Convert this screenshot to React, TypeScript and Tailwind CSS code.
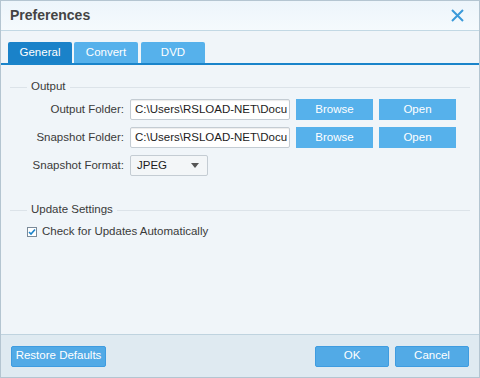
import React from "react";

const font = { fontFamily: '"Liberation Sans", Arial, sans-serif' };

function Section({ title, children }: { title: string; children?: React.ReactNode }) {
  return (
    <div>
      <div className="flex items-center h-[14px]">
        <div className="w-[17px] h-px bg-[#dce3e9]" />
        <span className="px-[4px] text-[11.5px] text-[#3a3a3a] leading-none">{title}</span>
        <div className="flex-1 h-px bg-[#dce3e9]" />
      </div>
      {children}
    </div>
  );
}

function Row({ label, value }: { label: string; value: string }) {
  return (
    <div className="flex items-center h-[21px]">
      <div className="w-[114px] text-right text-[11.5px] text-[#3a3a3a]">{label}</div>
      <div className="ml-[6px] w-[160px] h-[21px] border border-[#c4ccd3] rounded-[2px] bg-white overflow-hidden whitespace-nowrap text-[11.5px] text-[#1c1c1c] pl-[4px] leading-[19px] shadow-[inset_0_1px_1px_rgba(0,0,0,0.08)]">
        <span className="block w-[152px] overflow-hidden text-clip">{value}</span>
      </div>
      <button className="ml-[6px] w-[77px] h-[21px] bg-[#56b1eb] text-white text-[11.5px]">Browse</button>
      <button className="ml-[6px] w-[77px] h-[21px] bg-[#56b1eb] text-white text-[11.5px]">Open</button>
    </div>
  );
}

export default function App() {
  return (
    <div
      style={font}
      className="w-[480px] h-[378px] flex flex-col border border-[#b4c5d1] bg-[#f0f5f9] overflow-hidden"
    >
      {/* Title bar */}
      <div className="h-[30px] flex items-center justify-between pl-[9px] pr-[15px] bg-gradient-to-b from-[#edf5fb] to-[#f5fafd] border-b border-[#c2d8e4]">
        <span className="text-[14px] font-bold text-[#444]">Preferences</span>
        <svg width="13" height="13" viewBox="0 0 13 13">
          <path d="M1 1 L12 12 M12 1 L1 12" stroke="#3a9ad9" strokeWidth="2" />
        </svg>
      </div>

      {/* Tabs */}
      <div className="pt-[11px] flex gap-[2px] pl-[7px] border-b-2 border-[#1a84ca]">
        <div className="w-[64px] h-[21px] rounded-t-[2px] bg-[#1a82c9] text-white text-[11.5px] flex items-center justify-center">General</div>
        <div className="w-[64px] h-[21px] rounded-t-[2px] bg-[#56b1eb] text-white text-[11.5px] flex items-center justify-center">Convert</div>
        <div className="w-[64px] h-[21px] rounded-t-[2px] bg-[#56b1eb] text-white text-[11.5px] flex items-center justify-center ml-[1px]">DVD</div>
      </div>

      {/* Body */}
      <div className="flex-1 pl-[9px] pr-[9px] pt-[15px]">
        <Section title="Output">
          <div className="mt-[5px] flex flex-col gap-[7px]">
            <Row label="Output Folder:" value="C:\Users\RSLOAD-NET\Documents" />
            <Row label="Snapshot Folder:" value="C:\Users\RSLOAD-NET\Documents" />
            <div className="flex items-center h-[21px]">
              <div className="w-[114px] text-right text-[11.5px] text-[#3a3a3a]">Snapshot Format:</div>
              <div className="ml-[6px] w-[78px] h-[21px] border border-[#c4ccd3] rounded-[2px] bg-[#f3f6f8] flex items-center justify-between pl-[6px] pr-[8px] text-[11.5px] text-[#1c1c1c]">
                <span>JPEG</span>
                <svg width="8" height="5" viewBox="0 0 8 5">
                  <path d="M0 0 H8 L4 5 Z" fill="#555" />
                </svg>
              </div>
            </div>
          </div>
        </Section>
        <div className="mt-[27px]">
          <Section title="Update Settings">
            <label className="mt-[6px] ml-[17px] flex items-center gap-[5px] text-[11.5px] text-[#3a3a3a]">
              <span className="w-[10px] h-[10px] border border-[#7a8a99] bg-white flex items-center justify-center">
                <svg width="8" height="8" viewBox="0 0 8 8">
                  <path d="M1 4 L3 6 L7 1.5" stroke="#1a82c9" strokeWidth="1.6" fill="none" />
                </svg>
              </span>
              Check for Updates Automatically
            </label>
          </Section>
        </div>
      </div>

      {/* Footer */}
      <div className="h-[43px] border-t border-[#bfd3df] bg-[#dfeaf1] flex items-center px-[10px]">
        <button className="w-[95px] h-[21px] bg-[#52aae6] border border-[#3f9ce0] rounded-[2px] text-white text-[11.5px]">Restore Defaults</button>
        <div className="flex-1" />
        <button className="w-[74px] h-[21px] bg-[#52aae6] border border-[#3f9ce0] rounded-[2px] text-white text-[11.5px]">OK</button>
        <button className="ml-[6px] w-[74px] h-[21px] bg-[#52aae6] border border-[#3f9ce0] rounded-[2px] text-white text-[11.5px]">Cancel</button>
      </div>
    </div>
  );
}
